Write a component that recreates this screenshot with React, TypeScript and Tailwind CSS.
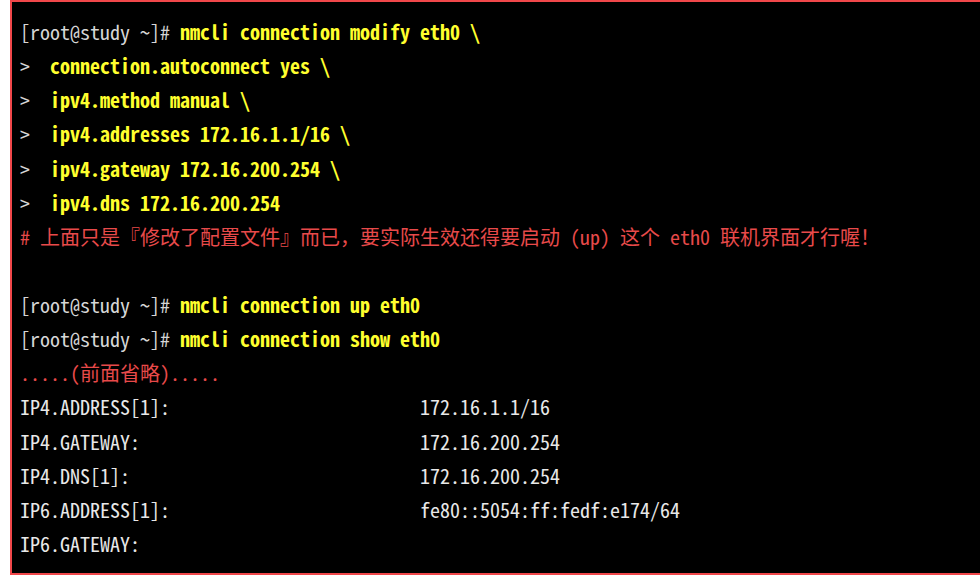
import React from 'react';

const mono = "font-['Noto_Sans_Mono_CJK_SC','Noto_Sans_Mono_CJK_TC','Liberation_Mono','Noto_Sans_CJK_SC',monospace]";

const Prompt = () => <span className='text-[#d6d6d6]'>[root@study ~]# </span>;
const Cmd = ({ children }: { children: React.ReactNode }) => (
    <span className='text-[#ffff2e] font-bold'>{children}</span>
);
const Cont = ({ children }: { children: React.ReactNode }) => (
    <div><span className='text-[#d6d6d6]'>{'>  '}</span><Cmd>{children}</Cmd></div>
);

const rows = [
    { id: 1, name: "IP4.ADDRESS[1]:", value: "172.16.1.1/16" },
    { id: 2, name: "IP4.GATEWAY:", value: "172.16.200.254" },
    { id: 3, name: "IP4.DNS[1]:", value: "172.16.200.254" },
    { id: 4, name: "IP6.ADDRESS[1]:", value: "fe80::5054:ff:fedf:e174/64" },
    { id: 5, name: "IP6.GATEWAY:", value: "" }
];

const App = () => {
    return (
        <div className='w-[980px] h-[577px] overflow-hidden bg-white'>
            <div className='ml-[10px] w-[1000px] h-[575px] border-2 border-[#f0474a] bg-black'>
                <div className={`${mono} text-[20px] leading-[34.13px] whitespace-pre pl-[8px] pt-[13px] text-[#e8e8e8]`}>
                    <div><Prompt /><Cmd>nmcli connection modify eth0 \</Cmd></div>
                    <Cont>connection.autoconnect yes \</Cont>
                    <Cont>ipv4.method manual \</Cont>
                    <Cont>ipv4.addresses 172.16.1.1/16 \</Cont>
                    <Cont>ipv4.gateway 172.16.200.254 \</Cont>
                    <Cont>ipv4.dns 172.16.200.254</Cont>
                    <div className='text-[#e84a4a]'># 上面只是『修改了配置文件』而已，要实际生效还得要启动 (up) 这个 eth0 联机界面才行喔！</div>
                    <div>&nbsp;</div>
                    <div><Prompt /><Cmd>nmcli connection up eth0</Cmd></div>
                    <div><Prompt /><Cmd>nmcli connection show eth0</Cmd></div>
                    <div className='text-[#e84a4a]'>.....(前面省略).....</div>
                    {
                        rows.map(row => (
                            <div key={row.id} className='flex'>
                                <span className='w-[400px]'>{row.name}</span>
                                <span>{row.value}</span>
                            </div>
                        ))
                    }
                </div>
            </div>
        </div>
    );
};

export default App;
